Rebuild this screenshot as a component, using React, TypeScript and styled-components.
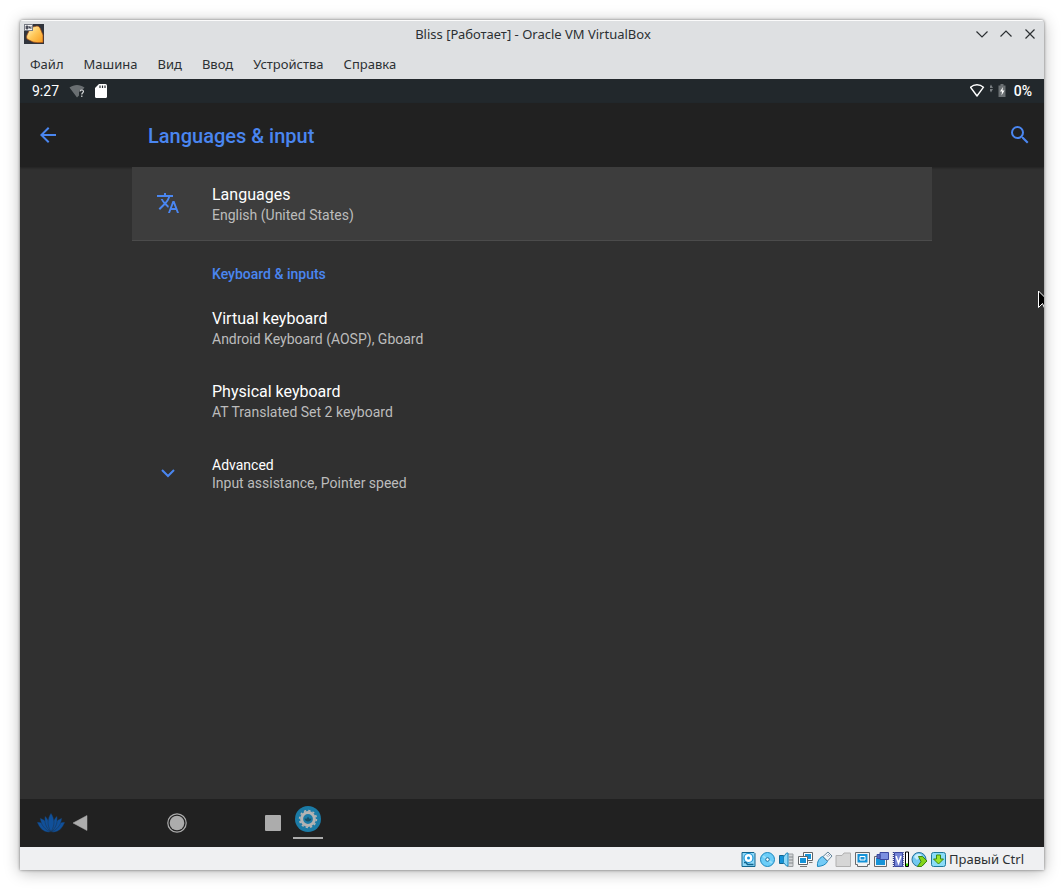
import React from 'react';
import styled, { createGlobalStyle } from 'styled-components';

const accent = '#4a86f0';
const ui = "'Noto Sans', 'Open Sans', sans-serif";
const droid = "Roboto, 'Noto Sans', sans-serif";

const GlobalStyle = createGlobalStyle`
  * { box-sizing: border-box; }
  body { margin: 0; background: #fff; font-family: ${ui}; }
  button { font: inherit; color: inherit; background: none; border: 0; padding: 0; margin: 0; cursor: pointer; }
  h1, h2, p, ul { margin: 0; padding: 0; }
  svg { display: block; }
`;

const Page = styled.div`
  min-height: 100vh;
  padding: 20px;
  display: flex;
`;

const Window = styled.div`
  position: relative;
  flex: 1;
  min-width: 0;
  display: flex;
  flex-direction: column;
  overflow: hidden;
  border-radius: 3px 3px 0 0;
  background: #dee0e2;
  box-shadow: 0 0 3px rgba(0, 0, 0, 0.5), 0 2px 16px rgba(0, 0, 0, 0.28);
`;

const TitleBar = styled.header`
  display: grid;
  grid-template-columns: 1fr auto 1fr;
  align-items: center;
  height: 28px;
  padding: 0 2px 0 4px;
  box-shadow: inset 0 1px 0 #fbfbfb;
  color: #2c3033;
  font-size: 13px;
  line-height: 18px;
`;

const WindowTitle = styled.h1`
  font-size: 13px;
  font-weight: 400;
  white-space: nowrap;
`;

const WindowControls = styled.div`
  display: flex;
  justify-content: flex-end;
`;

const ControlButton = styled.button`
  width: 24px;
  height: 24px;
  display: grid;
  place-items: center;
`;

const MenuBar = styled.nav`
  display: flex;
  height: 31px;
`;

const MenuItem = styled.button`
  padding: 0 10px;
  color: #2c3033;
  font-size: 13px;
  line-height: 18px;
`;

const Screen = styled.main`
  flex: 1;
  display: flex;
  flex-direction: column;
  background: #303030;
  font-family: ${droid};
`;

const StatusBar = styled.div`
  display: flex;
  justify-content: space-between;
  height: 24px;
  padding: 0 12px;
  background: #22282c;
  color: #fff;
  font-size: 14px;
  line-height: 24px;
`;

const StatusGroup = styled.div<{ $gap: number }>`
  display: flex;
  align-items: center;
  gap: ${(p) => p.$gap}px;
`;

const Battery = styled.span`
  margin-left: 4px;
  font-weight: 500;
`;

const AppBar = styled.div`
  display: flex;
  align-items: center;
  height: 64px;
  padding: 0 12px 0 16px;
  background: #212121;
  color: ${accent};
  box-shadow: 0 1px 2px rgba(0, 0, 0, 0.3);
`;

const AppTitle = styled.h2`
  flex: 1;
  padding: 2px 0 0 88px;
  font-size: 20px;
  line-height: 24px;
  font-weight: 500;
`;

const Content = styled.div`
  flex: 1;
  padding: 0 112px;
`;

const Row = styled.button<{ $selected?: boolean }>`
  display: grid;
  grid-template-columns: 80px 1fr;
  align-items: center;
  width: 100%;
  height: ${(p) => (p.$selected ? 74 : 73)}px;
  text-align: left;
  background: ${(p) => (p.$selected ? '#3d3d3d' : 'transparent')};
  border-bottom: ${(p) => (p.$selected ? '1px solid #4b4b4b' : '0')};
`;

const RowIcon = styled.span`
  padding: 0 0 2px 24px;
  color: ${accent};
`;

const RowText = styled.span`
  display: flex;
  flex-direction: column;
  padding-top: 2px;
`;

const RowTitle = styled.span<{ $small?: boolean }>`
  color: #fff;
  font-size: ${(p) => (p.$small ? 14 : 16)}px;
  line-height: ${(p) => (p.$small ? 18 : 22)}px;
`;

const RowSummary = styled.span`
  color: #bcbcbc;
  font-size: 14px;
  line-height: 19px;
`;

const Category = styled.h2`
  padding: 24px 0 8px 80px;
  color: ${accent};
  font-size: 14px;
  line-height: 18px;
  font-weight: 500;
`;

const NavBar = styled.nav`
  display: flex;
  align-items: center;
  height: 48px;
  padding-left: 17px;
  background: #212121;
`;

const NavKeys = styled.div`
  display: flex;
  gap: 64px;
`;

const NavButton = styled.button`
  width: 32px;
  height: 32px;
`;

const TaskButton = styled.button`
  display: flex;
  align-items: flex-start;
  justify-content: center;
  align-self: stretch;
  width: 30px;
  height: 33px;
  margin: 7px 0 0 4px;
  border-bottom: 2px solid #acacac;
`;

const MachineBar = styled.footer`
  display: flex;
  align-items: center;
  justify-content: flex-end;
  gap: 3px;
  height: 23px;
  padding-right: 20px;
  background: #eff0f2;
  color: #2c3033;
  font-size: 13px;
  line-height: 18px;
`;

const DeviceIcon = styled.svg`
  width: 16px;
  height: 16px;
  overflow: visible;
`;

const Pointer = styled.svg`
  position: absolute;
  top: 270px;
  right: 0;
`;

const menus = ['Файл', 'Машина', 'Вид', 'Ввод', 'Устройства', 'Справка'];

const AppIcon = () => (
  <svg width="20" height="20" viewBox="0 0 20 20" aria-hidden="true">
    <defs>
      <linearGradient id="gold" x1="0" y1="0" x2="1" y2="1">
        <stop offset="0.1" stopColor="#fff0b8" />
        <stop offset="0.5" stopColor="#ffc758" />
        <stop offset="1" stopColor="#f79a1e" />
      </linearGradient>
    </defs>
    <rect width="20" height="20" fill="#30343c" />
    <path d="M9 3L13 2Q15 2 16 4L19 11V18.500Q13 19 9 18L3 15Q2 13 3 11L5 7Z" fill="url(#gold)" stroke="#a04c18" strokeWidth="0.7" />
    <rect x="0.5" y="0.5" width="8" height="6" fill="#f4f4f4" stroke="#777b84" />
    <path d="M2 2h2v3h-2zM5 2v2h2M7 2v3" fill="#4b4e5b" stroke="#4b4e5b" strokeWidth="0.8" />
  </svg>
);

const ControlIcon = ({ d }: { d: string }) => (
  <svg width="12" height="12" viewBox="0 0 12 12" fill="none" stroke="#2c3033" strokeWidth="1.2" aria-hidden="true">
    <path d={d} />
  </svg>
);

const LotusIcon = () => (
  <svg width="28" height="20" viewBox="0 0 28 20" fill="#10509a" stroke="#202a36" strokeWidth="0.4" aria-hidden="true">
    <path d="M0 9C7 9 12 12 14 19C7 20 3 16 0 9Z" />
    <path d="M28 9C21 9 16 12 14 19C21 20 25 16 28 9Z" />
    <path d="M3 5C9 7 13 12 14 19C8 17 4 12 3 5Z" />
    <path d="M25 5C19 7 15 12 14 19C20 17 24 12 25 5Z" />
    <path d="M8 3C12 7 14 12 14 19C9 15 7 9 8 3Z" />
    <path d="M20 3C16 7 14 12 14 19C19 15 21 9 20 3Z" />
    <path d="M14 0C18 6 18 12 14 19C10 12 10 6 14 0Z" />
  </svg>
);

const GearIcon = () => (
  <svg width="26" height="26" viewBox="0 0 26 26" aria-hidden="true">
    <circle cx="13" cy="13" r="13" fill="#1b7ba6" />
    <circle cx="13" cy="13" r="8.4" fill="none" stroke="#b3b3b3" strokeWidth="1.6" strokeDasharray="2.2 2.2" />
    <circle cx="13" cy="13" r="6.4" fill="#1b7ba6" stroke="#b3b3b3" strokeWidth="3" />
    <path d="M9.500 12.500l2 .3 1.500-2 1.500 2 2-.3c-.4 2-1.600 3-3.500 3s-3.100-1-3.500-3z" fill="#174f66" />
  </svg>
);

const blue = '#1593d8';
const pale = '#8ed8f8';
const navy = '#12658f';

const deviceIcons: { name: string; art: React.ReactNode }[] = [
  {
    name: 'Hard disk',
    art: (
      <>
        <path d="M2 1.500h12l1 1v13h-13z" fill={pale} stroke={navy} />
        <circle cx="8.500" cy="7" r="4.500" fill="#fff" stroke={blue} strokeWidth="1.2" />
        <circle cx="8.500" cy="7" r="1.500" fill={blue} />
        <path d="M4 11.500h2l1.500 2h6" stroke={navy} strokeWidth="1.400" fill="none" />
      </>
    ),
  },
  {
    name: 'Optical disc',
    art: (
      <>
        <circle cx="8.500" cy="8.500" r="7" fill="#6bcdf8" stroke="#1b86bd" />
        <path d="M8.500 8.500L4 5M8.500 8.500l4.500 3.500" stroke="#98dffb" strokeWidth="2" />
        <circle cx="8.500" cy="8.500" r="1.800" fill="#fff" stroke="#1b6f9d" />
      </>
    ),
  },
  {
    name: 'Audio',
    art: (
      <>
        <path d="M9.500 3h5.500v12.500h-5.500z" fill="#d2d4d6" stroke="#9a9da0" />
        <path d="M11 6h4M11 9h4M11 12h4" stroke="#85898c" />
        <path d="M1.500 4.500h4v8h-4z" fill={blue} stroke={navy} />
        <path d="M5.500 6l3-4h1.500v13h-1.500l-3-3.500z" fill={pale} stroke="#1b86bd" />
      </>
    ),
  },
  {
    name: 'Network',
    art: (
      <>
        <path d="M6.500 1.500h9v8h-9z" fill="#fff" stroke="#606467" />
        <path d="M8 3h6v5h-6z" fill={blue} />
        <path d="M12 11.500h3.500" stroke="#777" />
        <path d="M1.500 5.500h9v8h-9z" fill="#fff" stroke="#606467" />
        <path d="M3 7h6v5h-6z" fill={blue} />
        <path d="M3 15.500h7" stroke="#777" />
      </>
    ),
  },
  {
    name: 'USB',
    art: (
      <>
        <path d="M1.500 15.500c-.5-4 1-8 5-10l5 5c-2 3.500-5 4.500-10 5z" fill="#74cbf6" stroke="#1b86bd" />
        <path d="M7 5.500l5-4.500 4 4-4.500 5z" fill="#eef4f7" stroke="#64849a" />
        <path d="M11 4.500l1 1M12.500 3.500l1 1" stroke="#557" />
      </>
    ),
  },
  {
    name: 'Shared folders',
    art: <path d="M1 15.500v-11h6l2-2.500h6.500v13.500z" fill="#d6d6d6" stroke="#b0b0b0" />,
  },
  {
    name: 'Display',
    art: (
      <>
        <path d="M1.500 1.500h14v12h-2v2h-10v-2h-2z" fill="#f2f2f2" stroke="#66696c" />
        <path d="M3.500 3h10v8.500h-10z" fill={blue} />
        <path d="M6 5.500h5v3.500h-5z" fill={blue} stroke="#fff" />
      </>
    ),
  },
  {
    name: 'Recording',
    art: (
      <>
        <path d="M1.500 5.500h12v10h-12z" fill="#f2f2f2" stroke="#66696c" />
        <path d="M3 7h9v7h-9z" fill={blue} />
        <path d="M7 1.500h8.500v7h-8.500z" fill="#7b8fe0" stroke="#3b489e" />
        <path d="M4 3.500h3v4h-3z" fill="#5668bd" stroke="#3b489e" />
      </>
    ),
  },
  {
    name: 'Processor',
    art: (
      <>
        <path d="M1.500 1v15M11 1v15" stroke="#30388c" strokeWidth="1.400" strokeDasharray="1 1" />
        <path d="M2.500 1.500h8v14h-8z" fill="#7585d6" stroke="#3b489e" />
        <path d="M4 5l2.500 7L9 5" fill="none" stroke="#fff" strokeWidth="1.600" />
        <path d="M13.500 1h3v14.500h-3z" fill="#fff" stroke="#000" />
        <path d="M14 12.500h2v2.500h-2z" fill="#38d000" />
      </>
    ),
  },
  {
    name: 'Mouse integration',
    art: (
      <>
        <circle cx="8" cy="8.500" r="7" fill="#72c8f0" stroke="#27719b" />
        <path d="M3 6c2-4 5-4 8-2L6 9z" fill="#c8edfc" />
        <path d="M7.500 5.500h4l4.500 4.500-5.500 5.500H6.500l3.500-5z" fill="#84d51c" stroke="#3e8610" />
      </>
    ),
  },
  {
    name: 'Keyboard capture',
    art: (
      <>
        <rect x="1.500" y="1.500" width="14" height="14" rx="2" fill="#8bdcf8" stroke="#20799c" />
        <path d="M6.500 4h4v4h3L8.500 13 3.500 8h3z" fill="#9be52a" stroke="#3e8610" />
      </>
    ),
  },
];

type SettingProps = {
  title: string;
  summary: string;
  selected?: boolean;
  small?: boolean;
  icon?: React.ReactNode;
};

const Setting = ({ title, summary, selected, small, icon }: SettingProps) => (
  <Row type="button" $selected={selected}>
    <RowIcon>{icon}</RowIcon>
    <RowText>
      <RowTitle $small={small}>{title}</RowTitle>
      <RowSummary>{summary}</RowSummary>
    </RowText>
  </Row>
);

export default function App() {
  return (
    <Page>
      <GlobalStyle />
      <Window>
        <TitleBar>
          <AppIcon />
          <WindowTitle>Bliss [Работает] - Oracle VM VirtualBox</WindowTitle>
          <WindowControls>
            <ControlButton aria-label="Minimize"><ControlIcon d="M0.500 3.500L6 9l5.500-5.500" /></ControlButton>
            <ControlButton aria-label="Maximize"><ControlIcon d="M0.500 8.500L6 3l5.500 5.500" /></ControlButton>
            <ControlButton aria-label="Close"><ControlIcon d="M1.500 1.500l9 9M10.500 1.500l-9 9" /></ControlButton>
          </WindowControls>
        </TitleBar>
        <MenuBar>
          {menus.map((m) => <MenuItem key={m} type="button">{m}</MenuItem>)}
        </MenuBar>

        <Screen>
          <StatusBar>
            <StatusGroup $gap={10}>
              <span>9:27</span>
              <svg width="16" height="16" viewBox="0 0 16 16" aria-hidden="true">
                <path d="M0.500 4.500C5 1 11 1 15.500 4.500L13 7.500H10v5l-2 2z" fill="#6a6f72" />
                <path d="M11 8.500c0-2 3.500-2 3.500 0 0 1.300-1.700 1.300-1.700 3M12.800 12.500v1.500" fill="none" stroke="#d5d7d8" strokeWidth="1.200" />
              </svg>
              <svg width="12" height="16" viewBox="0 0 12 16" aria-hidden="true">
                <path d="M4 1h6.500A1.500 1.500 0 0 1 12 2.500v11a1.500 1.500 0 0 1-1.500 1.500h-9A1.500 1.500 0 0 1 0 13.500V5z" fill="#fff" />
                <path d="M5 2.500v2.500M7.500 2.500v2.500M10 2.500v2.500" stroke="#22282c" strokeWidth="1.200" />
              </svg>
            </StatusGroup>
            <StatusGroup $gap={4}>
              <svg width="16" height="16" viewBox="0 0 16 16" aria-hidden="true">
                <path d="M0.500 4.200C4.300 1 9.700 1 13.500 4.200L7 13z" fill="none" stroke="#fff" strokeWidth="1.400" strokeLinejoin="round" />
              </svg>
              <svg width="4" height="16" viewBox="0 0 4 16" fill="#777c7f" aria-hidden="true">
                <path d="M1 1.500l2 3.500H-1zM1 9.500L-1 6h4z" />
              </svg>
              <svg width="8" height="16" viewBox="0 0 8 16" aria-hidden="true">
                <path d="M2.500 1h3v1.500h2v11.500h-7v-11.500h2z" fill="#6b7073" />
                <path d="M5 4L2 8.500h2L3.500 12.500 6.500 7.500h-2z" fill="#fff" />
              </svg>
              <Battery>0%</Battery>
            </StatusGroup>
          </StatusBar>

          <AppBar>
            <button type="button" aria-label="Back">
              <svg width="24" height="24" viewBox="0 0 24 24" fill="currentColor">
                <path d="M20 11H7.830l5.590-5.590L12 4l-8 8 8 8 1.410-1.410L7.830 13H20v-2z" />
              </svg>
            </button>
            <AppTitle>Languages &amp; input</AppTitle>
            <button type="button" aria-label="Search">
              <svg width="24" height="24" viewBox="0 0 24 24" fill="currentColor">
                <path d="M15.500 14h-.79l-.28-.27A6.471 6.471 0 0 0 16 9.500 6.500 6.500 0 1 0 9.500 16c1.610 0 3.090-.59 4.230-1.570l.27.28v.79l5 4.990L20.490 19l-4.990-5zm-6 0C7.010 14 5 11.990 5 9.500S7.010 5 9.500 5 14 7.010 14 9.500 11.990 14 9.500 14z" />
              </svg>
            </button>
          </AppBar>

          <Content>
            <Setting
              title="Languages"
              summary="English (United States)"
              selected
              icon={
                <svg width="24" height="24" viewBox="0 0 24 24" fill="currentColor" aria-hidden="true">
                  <path d="M12.870 15.070l-2.540-2.510.03-.03c1.740-1.940 2.980-4.170 3.710-6.530H17V4h-7V2H8v2H1v1.990h11.170C11.500 7.920 10.440 9.750 9 11.350 8.070 10.320 7.300 9.190 6.690 8h-2c.73 1.630 1.730 3.170 2.980 4.560l-5.090 5.020L4 19l5-5 3.110 3.110.76-2.040zM18.500 10h-2L12 22h2l1.120-3h4.750L21 22h2l-4.500-12zm-2.620 7l1.620-4.330L19.120 17h-3.240z" />
                </svg>
              }
            />
            <Category>Keyboard &amp; inputs</Category>
            <Setting title="Virtual keyboard" summary="Android Keyboard (AOSP), Gboard" />
            <Setting title="Physical keyboard" summary="AT Translated Set 2 keyboard" />
            <Setting
              title="Advanced"
              summary="Input assistance, Pointer speed"
              small
              icon={
                <svg width="24" height="24" viewBox="0 0 24 24" fill="none" stroke="currentColor" strokeWidth="2" aria-hidden="true">
                  <path d="M6 9l6 6 6-6" />
                </svg>
              }
            />
          </Content>

          <NavBar>
            <button type="button" aria-label="Applications"><LotusIcon /></button>
            <NavKeys>
              <NavButton aria-label="Back">
                <svg width="32" height="32" viewBox="0 0 32 32"><path d="M22 8.500v15L8 16z" fill="#acacac" stroke="#acacac" strokeLinejoin="round" strokeWidth="0.500" /></svg>
              </NavButton>
              <NavButton aria-label="Home">
                <svg width="32" height="32" viewBox="0 0 32 32">
                  <circle cx="16" cy="16" r="7.300" fill="#acacac" />
                  <circle cx="16" cy="16" r="9.200" fill="none" stroke="#acacac" strokeWidth="1.200" />
                </svg>
              </NavButton>
              <NavButton aria-label="Recent apps">
                <svg width="32" height="32" viewBox="0 0 32 32"><rect x="8" y="8" width="16" height="16" rx="1" fill="#acacac" /></svg>
              </NavButton>
            </NavKeys>
            <TaskButton aria-label="Settings"><GearIcon /></TaskButton>
          </NavBar>
        </Screen>

        <MachineBar>
          {deviceIcons.map(({ name, art }) => (
            <DeviceIcon key={name} viewBox="0 0 16 16" role="img" aria-label={name}>{art}</DeviceIcon>
          ))}
          <span>Правый Ctrl</span>
        </MachineBar>

        <Pointer width="6" height="20" viewBox="0 0 6 20" aria-hidden="true">
          <path d="M0.500 1v16.500l4-4 2 4.500h6v-5z" fill="#000" stroke="#fff" />
        </Pointer>
      </Window>
    </Page>
  );
}
